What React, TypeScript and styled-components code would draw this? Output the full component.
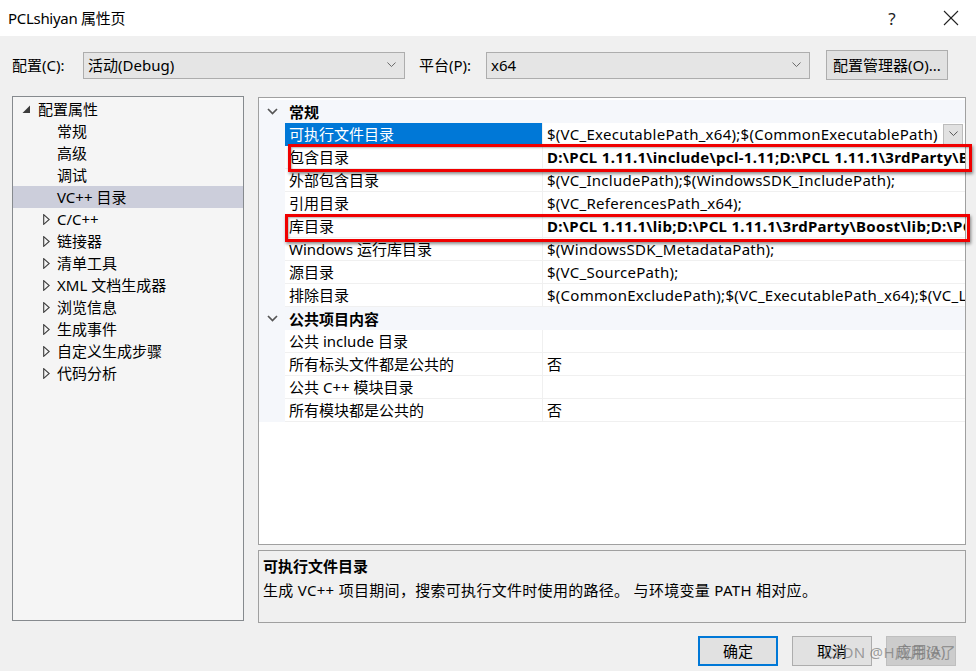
import React from "react";
import styled, { createGlobalStyle } from "styled-components";

const FONT = `"Segoe UI", "Noto Sans", "Noto Sans CJK SC", sans-serif`;

const Global = createGlobalStyle`
  html, body { margin: 0; padding: 0; }
  body {
    background: #f0f0f0;
    font-family: ${FONT};
    font-size: 15px;
    color: #000;
    width: 976px;
    height: 671px;
    overflow: hidden;
  }
  * { box-sizing: border-box; }
`;

const Window = styled.div`
  width: 976px;
  height: 671px;
  display: flex;
  flex-direction: column;
  background: #f0f0f0;
`;

const TitleBar = styled.div`
  height: 36px;
  background: #fff;
  display: flex;
  align-items: center;
  padding: 0 0 0 8px;
`;

const TitleText = styled.div`
  flex: 1;
  font-size: 15px;
  line-height: 20px;
  letter-spacing: -0.3px;
`;

const TitleButton = styled.div<{ $w: number }>`
  width: ${(p) => p.$w}px;
  height: 36px;
  display: flex;
  align-items: center;
  justify-content: center;
  font-size: 17px;
  color: #222;
`;

const Body = styled.div`
  flex: 1;
  display: flex;
  flex-direction: column;
  padding: 14px 10px 0 12px;
`;

const Toolbar = styled.div`
  height: 30px;
  display: flex;
  align-items: center;
`;

const Label = styled.div<{ $w: number }>`
  width: ${(p) => p.$w}px;
  line-height: 20px;
  white-space: nowrap;
`;

const Combo = styled.div<{ $w: number }>`
  width: ${(p) => p.$w}px;
  height: 27px;
  background: #e5e5e5;
  border: 1px solid #adadad;
  display: flex;
  align-items: center;
  padding: 0 8px 0 4px;
  margin-right: 14px;
  line-height: 20px;
`;

const ComboText = styled.div`
  flex: 1;
`;

const Button = styled.div<{ $w: number; $primary?: boolean; $disabled?: boolean }>`
  width: ${(p) => p.$w}px;
  height: 30px;
  border: ${(p) => (p.$primary ? "2px solid #0078d7" : "1px solid #adadad")};
  background: ${(p) => (p.$disabled ? "#cccccc" : "#e1e1e1")};
  color: ${(p) => (p.$disabled ? "#8a8a8a" : "#000")};
  border-color: ${(p) => (p.$disabled ? "#bfbfbf" : p.$primary ? "#0078d7" : "#adadad")};
  display: flex;
  align-items: center;
  justify-content: center;
  line-height: 20px;
  white-space: nowrap;
`;

const ToolbarButton = styled(Button)`
  margin-left: 2px;
`;

const Content = styled.div`
  margin-top: 16px;
  display: flex;
  gap: 14px;
`;

const Tree = styled.div`
  width: 232px;
  height: 525px;
  background: #f5f5f5;
  border: 1px solid #868a8e;
  padding-top: 1px;
`;

const TreeRow = styled.div<{ $indent: number; $selected?: boolean }>`
  height: 22px;
  display: flex;
  align-items: center;
  padding-left: ${(p) => p.$indent}px;
  background: ${(p) => (p.$selected ? "#cccedb" : "transparent")};
  line-height: 20px;
  white-space: nowrap;
`;

const TreeIcon = styled.div<{ $w: number }>`
  width: ${(p) => p.$w}px;
  display: flex;
  align-items: center;
`;

const RightCol = styled.div`
  width: 708px;
  display: flex;
  flex-direction: column;
  gap: 5px;
`;

const Grid = styled.div`
  position: relative;
  height: 448px;
  margin-top: 1px;
  background: #fff;
  border: 1px solid #a0a0a0;
  padding-top: 2px;
`;

const CatRow = styled.div`
  height: 23px;
  display: flex;
  align-items: center;
  background: #f5f7fb;
  font-weight: bold;
  line-height: 20px;
`;

const CatText = styled.span`
  padding-left: 4px;
`;

const Gutter = styled.div`
  width: 26px;
  height: 100%;
  display: flex;
  align-items: center;
  justify-content: center;
  background: #f5f7fb;
  flex: none;
`;

const PropRow = styled.div`
  height: 23px;
  display: flex;
`;

const NameCell = styled.div<{ $selected?: boolean }>`
  width: 258px;
  flex: none;
  padding-left: 4px;
  display: flex;
  align-items: center;
  background: ${(p) => (p.$selected ? "#0078d7" : "#fff")};
  color: ${(p) => (p.$selected ? "#fff" : "#000")};
  border-bottom: 1px solid ${(p) => (p.$selected ? "#0078d7" : "#f0f0f0")};
  border-right: 1px solid #f0f0f0;
  line-height: 20px;
  white-space: nowrap;
`;

const ValueCell = styled.div<{ $bold?: boolean }>`
  flex: 1;
  min-width: 0;
  padding-left: 4px;
  display: flex;
  align-items: center;
  border-bottom: 1px solid #f0f0f0;
  font-weight: ${(p) => (p.$bold ? "bold" : "normal")};
  line-height: 20px;
  white-space: nowrap;
  overflow: hidden;
  letter-spacing: ${(p) => (p.$bold ? "0.3px" : "0.27px")};
`;

const ValueText = styled.div`
  flex: 1;
  overflow: hidden;
`;

const DropBtn = styled.div`
  width: 20px;
  height: 21px;
  flex: none;
  margin-right: 2px;
  background: #e1e1e1;
  border: 1px solid #bcbcbc;
  display: flex;
  align-items: center;
  justify-content: center;
`;

const Highlight = styled.div<{ $top: number; $left: number; $right: number }>`
  position: absolute;
  top: ${(p) => p.$top}px;
  left: ${(p) => p.$left}px;
  right: ${(p) => p.$right}px;
  height: 28px;
  border: 3px solid #f00000;
  box-shadow: 1px 2px 3px rgba(0, 0, 0, 0.45), inset 1px 1px 2px rgba(0, 0, 0, 0.3);
  pointer-events: none;
`;

const Desc = styled.div`
  height: 73px;
  border: 1px solid #a0a0a0;
  background: #f0f0f0;
  padding: 3px 4px;
`;

const DescTitle = styled.div`
  font-weight: bold;
  line-height: 24px;
`;

const DescText = styled.div`
  line-height: 24px;
  letter-spacing: 0.3px;
  white-space: pre;
`;

const Footer = styled.div`
  position: relative;
  margin-top: 13px;
  display: flex;
  justify-content: flex-end;
  gap: 14px;
  padding-right: 10px;
`;

const Watermark = styled.div`
  position: absolute;
  right: 10px;
  top: 5px;
  font-size: 15px;
  line-height: 22px;
  color: rgba(120, 120, 120, 0.7);
  white-space: nowrap;
  pointer-events: none;
  letter-spacing: 0.3px;
`;

const Chevron = ({ color = "#444", w = 9 }: { color?: string; w?: number }) => (
  <svg width={w} height={w / 2 + 1} viewBox="0 0 10 6">
    <polyline points="0.5,0.5 5,5 9.5,0.5" fill="none" stroke={color} strokeWidth="1.1" />
  </svg>
);

const CatChevron = () => (
  <svg width="11" height="7" viewBox="0 0 11 7">
    <polyline points="1,1 5.5,5.5 10,1" fill="none" stroke="#555" strokeWidth="1.7" />
  </svg>
);

const Expanded = () => (
  <svg width="9" height="9" viewBox="0 0 9 9">
    <polygon points="8,0.5 8,8 0.5,8" fill="#3c3c3c" />
  </svg>
);

const Collapsed = () => (
  <svg width="7" height="11" viewBox="0 0 7 11">
    <polygon points="0.7,0.7 6.2,5.5 0.7,10.3" fill="none" stroke="#3c3c3c" strokeWidth="1.1" />
  </svg>
);

const CloseX = () => (
  <svg width="16" height="16" viewBox="0 0 16 16">
    <line x1="1" y1="1" x2="15" y2="15" stroke="#222" strokeWidth="1.1" />
    <line x1="15" y1="1" x2="1" y2="15" stroke="#222" strokeWidth="1.1" />
  </svg>
);

type Item = { text: string; kind: "root" | "leaf" | "branch"; selected?: boolean };
const treeItems: Item[] = [
  { text: "配置属性", kind: "root" },
  { text: "常规", kind: "leaf" },
  { text: "高级", kind: "leaf" },
  { text: "调试", kind: "leaf" },
  { text: "VC++ 目录", kind: "leaf", selected: true },
  { text: "C/C++", kind: "branch" },
  { text: "链接器", kind: "branch" },
  { text: "清单工具", kind: "branch" },
  { text: "XML 文档生成器", kind: "branch" },
  { text: "浏览信息", kind: "branch" },
  { text: "生成事件", kind: "branch" },
  { text: "自定义生成步骤", kind: "branch" },
  { text: "代码分析", kind: "branch" },
];

type Row =
  | { cat: string }
  | { name: string; value: string; bold?: boolean; selected?: boolean };

const rows: Row[] = [
  { cat: "常规" },
  { name: "可执行文件目录", value: "$(VC_ExecutablePath_x64);$(CommonExecutablePath)", selected: true },
  { name: "包含目录", value: "D:\\PCL 1.11.1\\include\\pcl-1.11;D:\\PCL 1.11.1\\3rdParty\\Boost\\include\\boost-1_74", bold: true },
  { name: "外部包含目录", value: "$(VC_IncludePath);$(WindowsSDK_IncludePath);" },
  { name: "引用目录", value: "$(VC_ReferencesPath_x64);" },
  { name: "库目录", value: "D:\\PCL 1.11.1\\lib;D:\\PCL 1.11.1\\3rdParty\\Boost\\lib;D:\\PCL 1.11.1\\3rdParty\\FLANN\\lib", bold: true },
  { name: "Windows 运行库目录", value: "$(WindowsSDK_MetadataPath);" },
  { name: "源目录", value: "$(VC_SourcePath);" },
  { name: "排除目录", value: "$(CommonExcludePath);$(VC_ExecutablePath_x64);$(VC_LibraryPath_x64)" },
  { cat: "公共项目内容" },
  { name: "公共 include 目录", value: "" },
  { name: "所有标头文件都是公共的", value: "否" },
  { name: "公共 C++ 模块目录", value: "" },
  { name: "所有模块都是公共的", value: "否" },
];

export default function App() {
  return (
    <Window>
      <Global />
      <TitleBar>
        <TitleText>PCLshiyan 属性页</TitleText>
        <TitleButton $w={68}>?</TitleButton>
        <TitleButton $w={50}>
          <CloseX />
        </TitleButton>
      </TitleBar>
      <Body>
        <Toolbar>
          <Label $w={71}>配置(C):</Label>
          <Combo $w={322}>
            <ComboText>活动(Debug)</ComboText>
            <Chevron color="#666" />
          </Combo>
          <Label $w={67}>平台(P):</Label>
          <Combo $w={324}>
            <ComboText>x64</ComboText>
            <Chevron color="#666" />
          </Combo>
          <ToolbarButton $w={122}>配置管理器(O)...</ToolbarButton>
        </Toolbar>
        <Content>
          <Tree>
            {treeItems.map((it) => (
              <TreeRow
                key={it.text}
                $indent={it.kind === "root" ? 9 : it.kind === "branch" ? 30 : 44}
                $selected={it.selected}
              >
                {it.kind === "root" && (
                  <TreeIcon $w={16}>
                    <Expanded />
                  </TreeIcon>
                )}
                {it.kind === "branch" && (
                  <TreeIcon $w={14}>
                    <Collapsed />
                  </TreeIcon>
                )}
                {it.text}
              </TreeRow>
            ))}
          </Tree>
          <RightCol>
            <Grid>
              {rows.map((r, i) =>
                "cat" in r ? (
                  <CatRow key={i}>
                    <Gutter>
                      <CatChevron />
                    </Gutter>
                    <CatText>{r.cat}</CatText>
                  </CatRow>
                ) : (
                  <PropRow key={i}>
                    <Gutter />
                    <NameCell $selected={r.selected}>{r.name}</NameCell>
                    <ValueCell $bold={r.bold}>
                      <ValueText>{r.value}</ValueText>
                      {r.selected && (
                        <DropBtn>
                          <Chevron color="#555" w={9} />
                        </DropBtn>
                      )}
                    </ValueCell>
                  </PropRow>
                )
              )}
              <Highlight $top={46} $left={29} $right={-7} />
              <Highlight $top={116} $left={26} $right={-5} />
            </Grid>
            <Desc>
              <DescTitle>可执行文件目录</DescTitle>
              <DescText>生成 VC++ 项目期间，搜索可执行文件时使用的路径。 与环境变量 PATH 相对应。</DescText>
            </Desc>
          </RightCol>
        </Content>
        <Footer>
          <Button $w={80} $primary>确定</Button>
          <Button $w={80}>取消</Button>
          <Button $w={70} $disabled>应用(A)</Button>
          <Watermark>CSDN @H成用没了</Watermark>
        </Footer>
      </Body>
    </Window>
  );
}
